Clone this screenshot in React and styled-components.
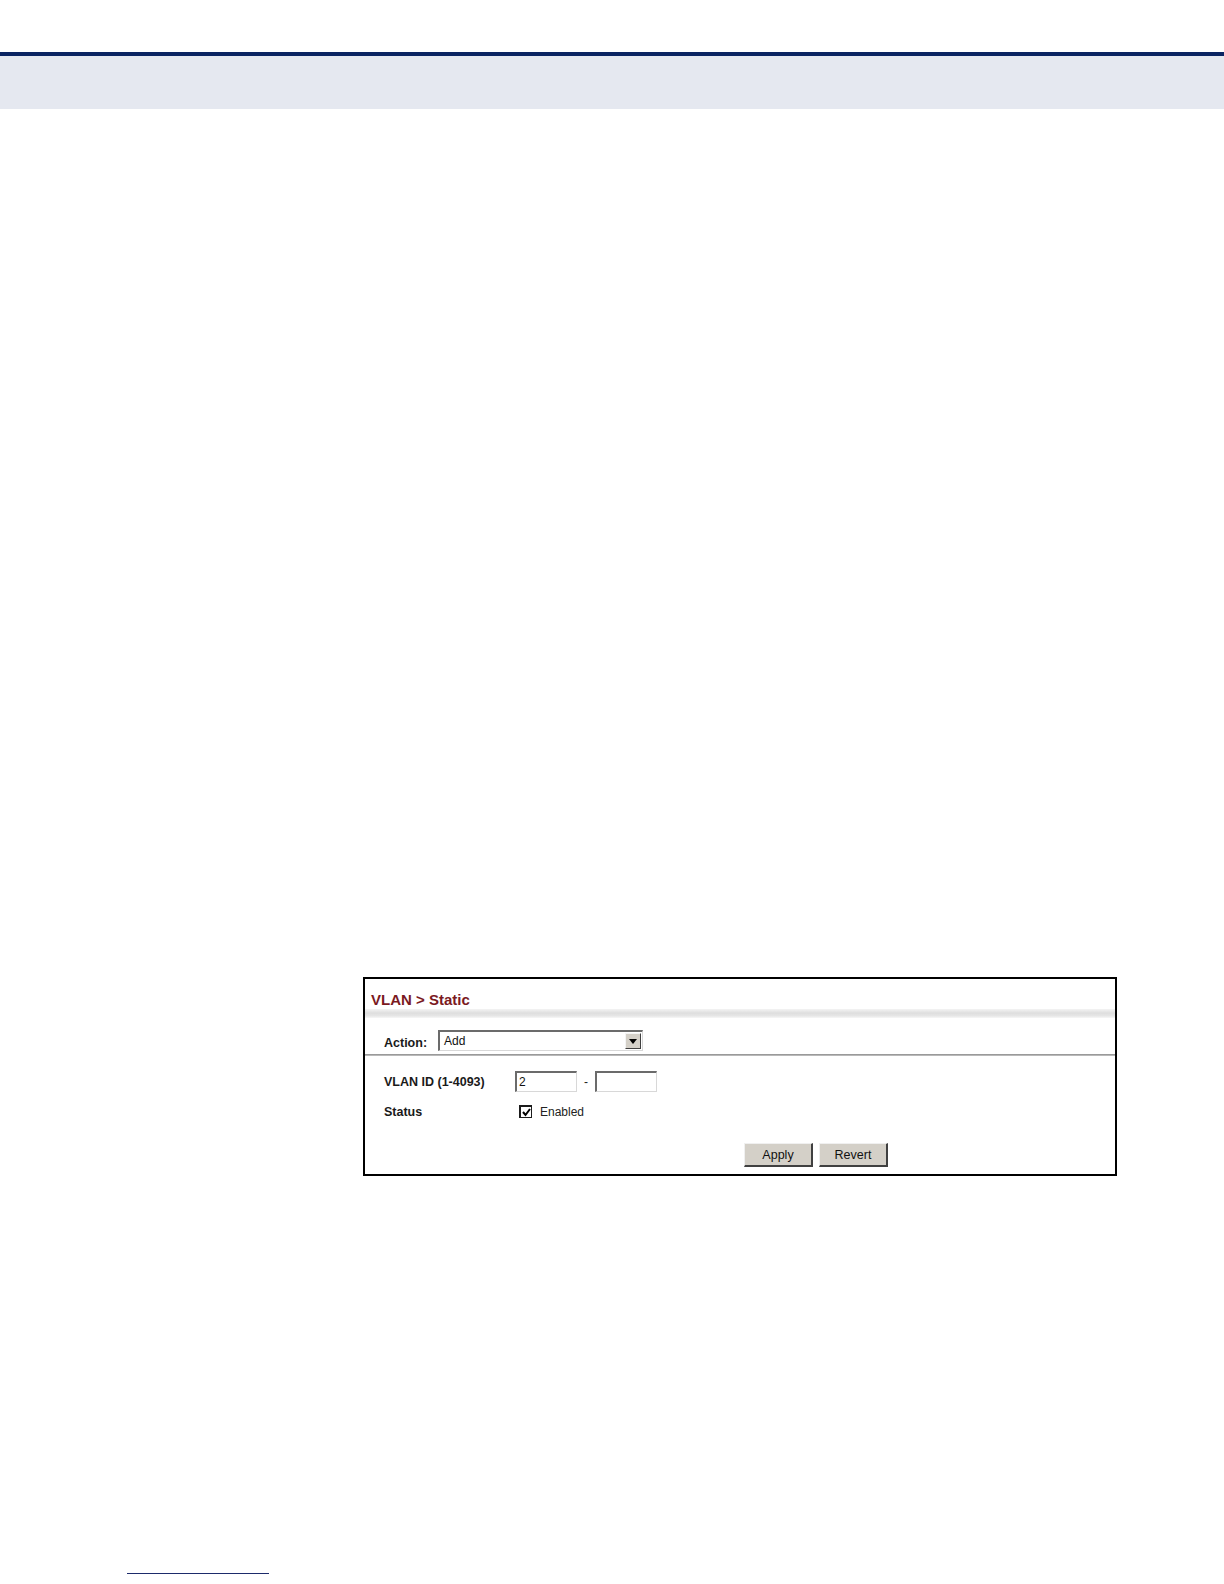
import React from "react";
import styled, { createGlobalStyle } from "styled-components";

const Global = createGlobalStyle`
  html, body { margin: 0; padding: 0; background: #fff; }
  body { font-family: "Liberation Sans", Arial, sans-serif; }
  #root { width: 1224px; min-height: 1584px; }
`;

const Page = styled.div`
  width: 1224px;
  height: 1584px;
  display: flex;
  flex-direction: column;
  overflow: hidden;
`;

const HeaderBand = styled.div`
  margin-top: 52px;
  height: 53px;
  border-top: 4px solid #0a2462;
  background: #e5e8f0;
`;

const Body = styled.div`
  flex: 1;
  display: flex;
  flex-direction: column;
  padding-top: 868px;
  padding-left: 363px;
`;

const Panel = styled.div`
  width: 750px;
  height: 195px;
  border: 2px solid #000;
  display: flex;
  flex-direction: column;
  background: #fff;
`;

const TitleBar = styled.div`
  height: 30px;
  display: flex;
  align-items: flex-end;
  padding-left: 6px;
  box-sizing: border-box;
`;

const Title = styled.span`
  font-size: 15px;
  font-weight: bold;
  color: #7b1a1f;
  line-height: 18px;
`;

const GradientBand = styled.div`
  height: 9px;
  background: linear-gradient(#f4f4f4, #dedede 45%, #e6e6e6 75%, #f7f7f7);
`;

const ActionRow = styled.div`
  height: 36px;
  display: flex;
  align-items: flex-end;
  padding-left: 19px;
  padding-bottom: 3px;
  box-sizing: border-box;
  gap: 11px;
`;

const Label = styled.span`
  font-size: 12.5px;
  font-weight: bold;
  color: #1a1a1a;
  width: ${(p) => (p.$w ? `${p.$w}px` : "auto")};
  flex-shrink: 0;
`;

const ActionLabel = styled(Label)`
  padding-bottom: 1px;
`;

const Select = styled.div`
  width: 205px;
  height: 21px;
  box-sizing: border-box;
  border-top: 2px solid #6b6b6b;
  border-left: 2px solid #6b6b6b;
  border-right: 1px solid #d8d8d8;
  border-bottom: 1px solid #d8d8d8;
  display: flex;
  align-items: center;
  justify-content: space-between;
  padding-left: 4px;
  padding-right: 1px;
  font-size: 12px;
  color: #111;
  background: #fff;
`;

const SelectArrow = styled.div`
  width: 16px;
  height: 16px;
  box-sizing: border-box;
  background: #d4d0c8;
  border-top: 1px solid #f4f4f4;
  border-left: 1px solid #f4f4f4;
  border-right: 1px solid #404040;
  border-bottom: 1px solid #404040;
  display: flex;
  align-items: center;
  justify-content: center;
`;

const Divider = styled.div`
  height: 2px;
  background: linear-gradient(#8a8a8a, #c8c8c8);
`;

const Form = styled.div`
  flex: 1;
  display: flex;
  flex-direction: column;
  padding: 15px 0 0 19px;
`;

const FormRow = styled.div`
  display: flex;
  align-items: center;
  height: 21px;
  margin-bottom: ${(p) => p.$mb || 0}px;
`;

const TextInput = styled.div`
  width: 62px;
  height: 21px;
  box-sizing: border-box;
  border-top: 2px solid #6b6b6b;
  border-left: 2px solid #6b6b6b;
  border-right: 1px solid #d8d8d8;
  border-bottom: 1px solid #d8d8d8;
  font-size: 12px;
  line-height: 18px;
  padding-left: 2px;
  color: #111;
`;

const Dash = styled.span`
  font-size: 12px;
  width: 18px;
  text-align: center;
  color: #222;
`;

const CheckBox = styled.div`
  width: 13px;
  height: 13px;
  box-sizing: border-box;
  border: 1px solid #1c1c1c;
  border-top-width: 2px;
  border-left-width: 2px;
  background: #fff;
  display: flex;
  align-items: center;
  justify-content: center;
  margin-left: 4px;
  margin-right: 8px;
`;

const Text = styled.span`
  font-size: 12px;
  color: #222;
`;

const ButtonRow = styled.div`
  display: flex;
  gap: 6px;
  margin-top: 21px;
  padding-left: 360px;
`;

const Button = styled.div`
  width: 69px;
  height: 24px;
  box-sizing: border-box;
  background: #d4d0c8;
  border-top: 1px solid #f0f0f0;
  border-left: 1px solid #f0f0f0;
  border-right: 2px solid #404040;
  border-bottom: 2px solid #404040;
  display: flex;
  align-items: center;
  justify-content: center;
  font-size: 12.5px;
  color: #111;
`;

const FooterRule = styled.div`
  margin-top: auto;
  margin-bottom: 10px;
  margin-left: -236px;
  width: 142px;
  height: 1px;
  background: #1d2b6b;
`;

export default function App() {
  return (
    <>
      <Global />
      <Page>
        <HeaderBand />
        <Body>
          <Panel>
            <TitleBar>
              <Title>VLAN &gt; Static</Title>
            </TitleBar>
            <GradientBand />
            <ActionRow>
              <ActionLabel>Action:</ActionLabel>
              <Select>
                <span>Add</span>
                <SelectArrow>
                  <svg width="8" height="5" viewBox="0 0 8 5">
                    <polygon points="0,0 8,0 4,5" fill="#000" />
                  </svg>
                </SelectArrow>
              </Select>
            </ActionRow>
            <Divider />
            <Form>
              <FormRow $mb={9}>
                <Label $w={131}>VLAN ID (1-4093)</Label>
                <TextInput>2</TextInput>
                <Dash>-</Dash>
                <TextInput />
              </FormRow>
              <FormRow>
                <Label $w={131}>Status</Label>
                <CheckBox>
                  <svg width="9" height="9" viewBox="0 0 9 9">
                    <polyline points="1,4 3.5,7 8,1" fill="none" stroke="#000" strokeWidth="2" />
                  </svg>
                </CheckBox>
                <Text>Enabled</Text>
              </FormRow>
              <ButtonRow>
                <Button>Apply</Button>
                <Button>Revert</Button>
              </ButtonRow>
            </Form>
          </Panel>
          <FooterRule />
        </Body>
      </Page>
    </>
  );
}
